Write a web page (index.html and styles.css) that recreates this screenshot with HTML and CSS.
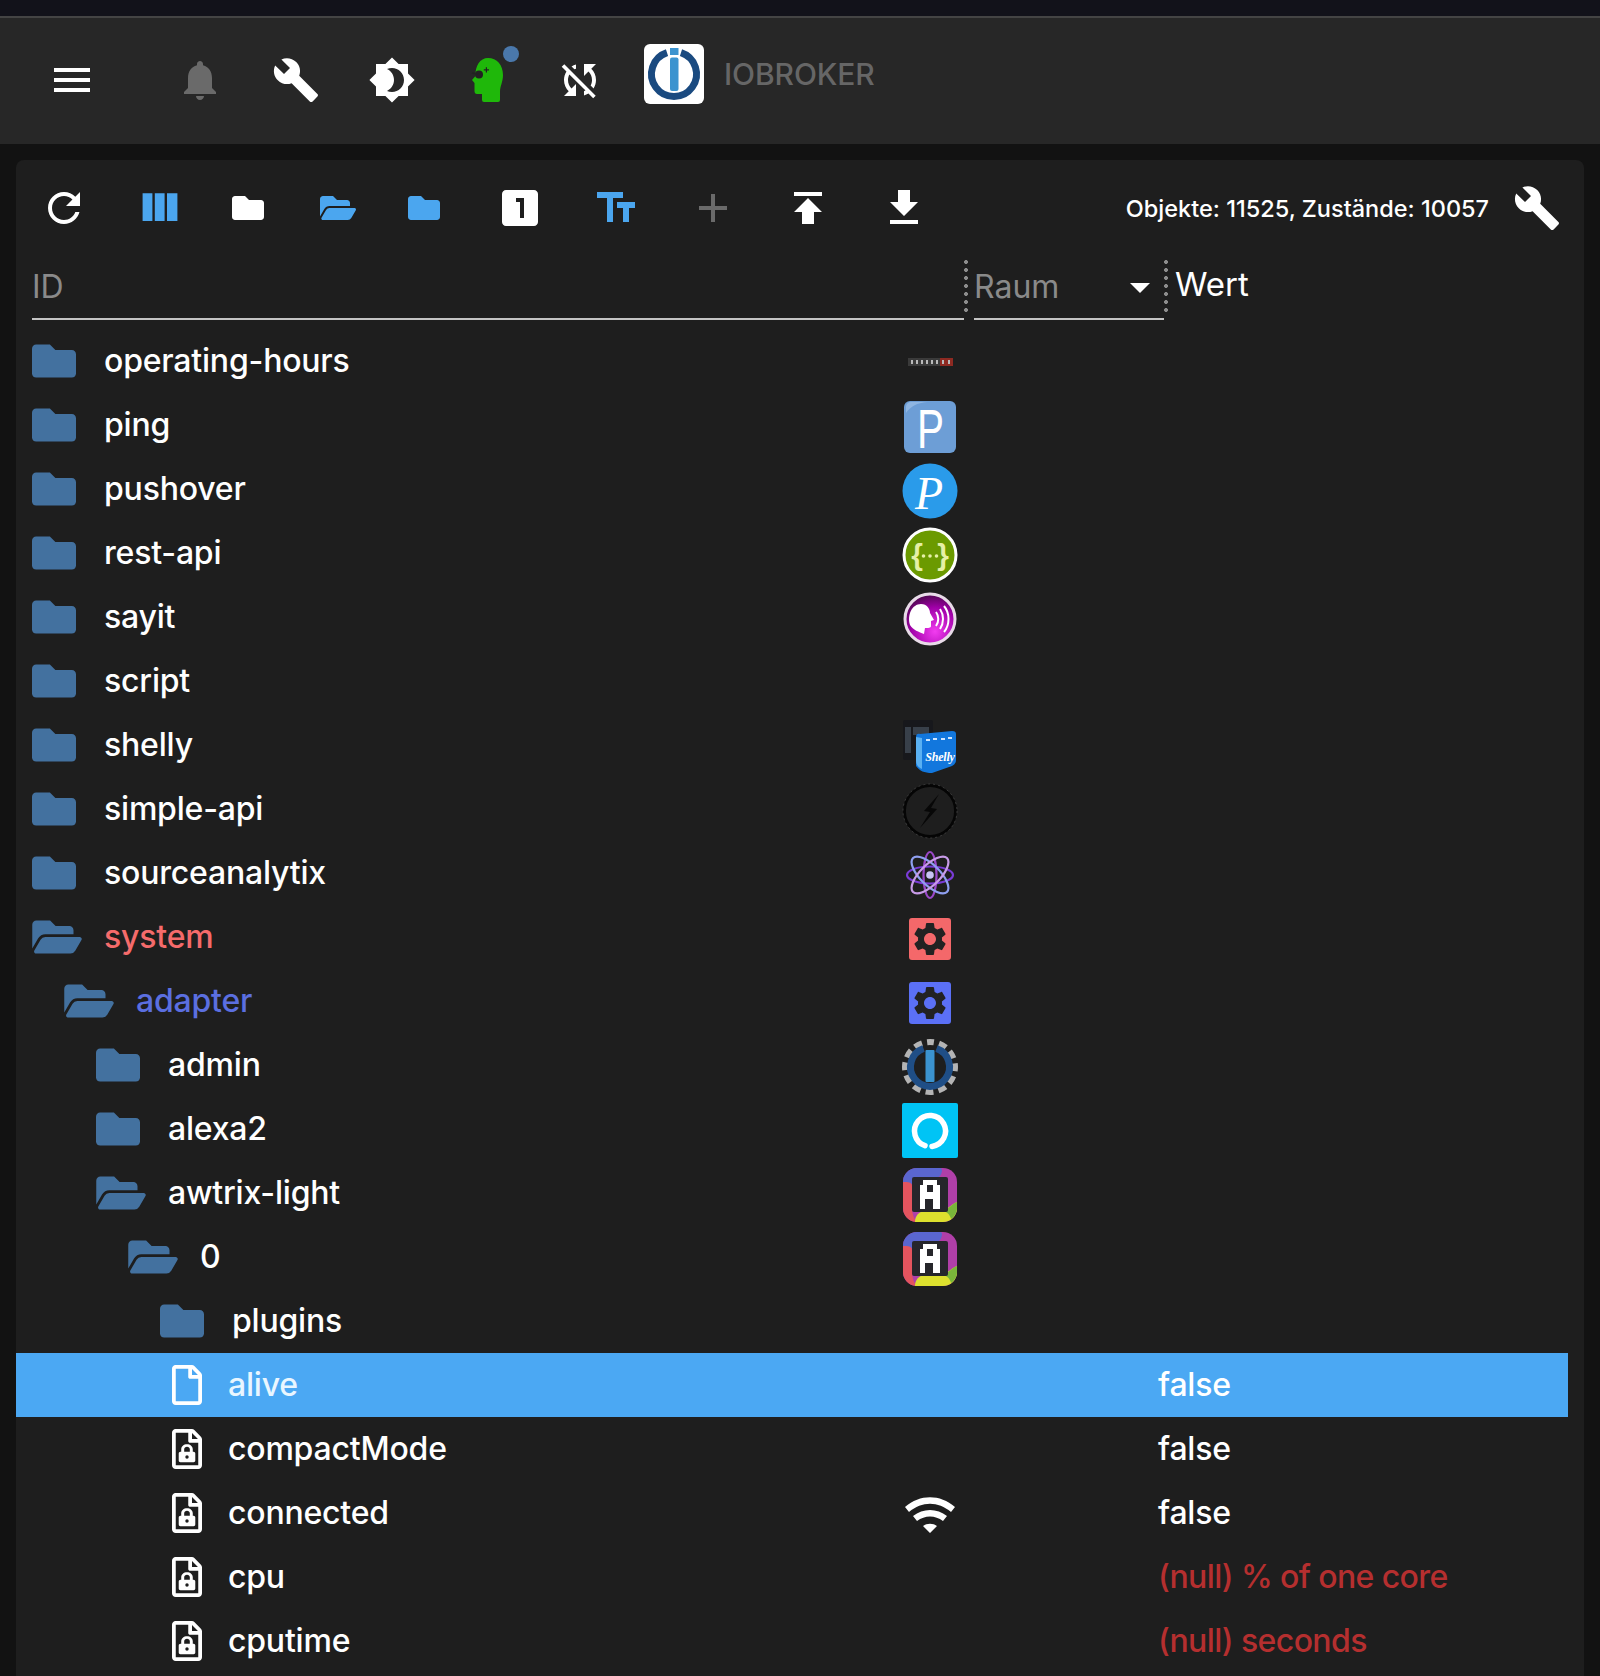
FILE: index.html
```html
<!DOCTYPE html>
<html lang="de">
<head>
<meta charset="utf-8">
<title>ioBroker Objekte</title>
<link rel="stylesheet" href="styles.css">
</head>
<body>
<svg class="defs" width="0" height="0" aria-hidden="true">
  <defs>
    <symbol id="fa-folder" viewBox="0 0 512 512"><path d="M464 128H272l-64-64H48C21.49 64 0 85.49 0 112v288c0 26.51 21.49 48 48 48h416c26.51 0 48-21.49 48-48V176c0-26.51-21.49-48-48-48z"/></symbol>
    <symbol id="fa-open" viewBox="0 0 576 512"><path d="M572.694 292.093L500.27 416.248A63.997 63.997 0 0 1 444.989 448H45.025c-18.523 0-30.064-20.093-20.731-36.093l72.424-124.155A64 64 0 0 1 152 256h399.964c18.523 0 30.064 20.093 20.73 36.093zM152 224h328v-48c0-26.51-21.49-48-48-48H272l-64-64H48C21.49 64 0 85.49 0 112v278.046l69.077-118.418C86.214 242.25 117.989 224 152 224z"/></symbol>
    <symbol id="fa-file" viewBox="0 0 384 512"><path d="M369.9 97.9L286 14C277 5 264.8-.1 252.1-.1H48C21.5 0 0 21.5 0 48v416c0 26.5 21.5 48 48 48h288c26.5 0 48-21.5 48-48V131.9c0-12.7-5.1-25-14.1-34zM332.1 128H256V51.9l76.1 76.1zM48 464V48h160v104c0 13.3 10.7 24 24 24h104v288H48z"/></symbol>
    <symbol id="fa-lock" viewBox="0 0 384 512"><path d="M369.9 97.9L286 14C277 5 264.8-.1 252.1-.1H48C21.5 0 0 21.5 0 48v416c0 26.5 21.5 48 48 48h288c26.5 0 48-21.5 48-48V131.9c0-12.7-5.1-25-14.1-34zM332.1 128H256V51.9l76.1 76.1zM48 464V48h160v104c0 13.3 10.7 24 24 24h104v288H48z"/><path fill-rule="evenodd" d="M118 290v-30c0-40 32-66 74-66s74 26 74 66v30h10c12 0 22 10 22 22v92c0 12-10 22-22 22H108c-12 0-22-10-22-22v-92c0-12 10-22 22-22zm38 0h72v-30c0-20-16-32-36-32s-36 12-36 32zm36 46a22 22 0 1 0 0 44a22 22 0 1 0 0-44z"/></symbol>
    <symbol id="m-wrench" viewBox="0 0 24 24"><path d="M22.7 19l-9.1-9.1c.9-2.3.4-5-1.5-6.9-2-2-5-2.4-7.4-1.3L9 6 6 9 1.6 4.7C.4 7.1.9 10.1 2.9 12.1c1.9 1.9 4.6 2.4 6.9 1.5l9.1 9.1c.4.4 1 .4 1.4 0l2.3-2.3c.5-.4.5-1.1.1-1.4z"/></symbol>
    <symbol id="m-gear" viewBox="0 0 24 24"><path d="M19.14 12.94c.04-.3.06-.61.06-.94 0-.32-.02-.64-.07-.94l2.03-1.58c.18-.14.23-.41.12-.61l-1.92-3.32c-.12-.22-.37-.29-.59-.22l-2.39.96c-.5-.38-1.03-.7-1.62-.94l-.36-2.54c-.04-.24-.24-.41-.48-.41h-3.84c-.24 0-.43.17-.47.41l-.36 2.54c-.59.24-1.13.57-1.62.94l-2.39-.96c-.22-.08-.47 0-.59.22L2.74 8.87c-.12.21-.08.47.12.61l2.03 1.58c-.05.3-.09.63-.09.94s.02.64.07.94l-2.03 1.58c-.18.14-.23.41-.12.61l1.92 3.32c.12.22.37.29.59.22l2.39-.96c.5.38 1.03.7 1.62.94l.36 2.54c.05.24.24.41.48.41h3.84c.24 0 .44-.17.47-.41l.36-2.54c.59-.24 1.13-.56 1.62-.94l2.39.96c.22.08.47 0 .59-.22l1.92-3.32c.12-.22.07-.47-.12-.61l-2.01-1.58zM12 15.6c-1.98 0-3.6-1.62-3.6-3.6s1.62-3.6 3.6-3.6 3.6 1.62 3.6 3.6-1.62 3.6-3.6 3.6z"/></symbol>
    <symbol id="awtrix" viewBox="0 0 64 64">
      <rect x="5" y="7" width="54" height="54" rx="14" fill="#b03fa8"/>
      <path d="M5 23V21A14 14 0 0 1 19 7H41c1 0 3 0 3 2 0 5-3 8-7 8H20c-3 0-5 2-6 6z" fill="#5a66cf"/>
      <path d="M5 21c5 0 9 0 9 4v22c0 6 2 10 4 14h0A14 14 0 0 1 5 47z" fill="#e4545e"/>
      <path d="M17 61c0-6 4-11 10-11h16c5 0 9-6 16-9v6a14 14 0 0 1-14 14z" fill="#dde02e"/>
      <path d="M44 50c5 0 8-6 15-9v6c0 5-3 9-6 11-1-5-5-8-9-8z" fill="#79b63a"/>
      <rect x="14" y="16" width="36" height="35" rx="2" fill="#26262b"/>
      <path fill-rule="evenodd" d="M22 48V24h3v-5h14v5h3v24h-7V38h-8v10zm7-17h6v-7h-6z" fill="#fff"/>
    </symbol>
  </defs>
</svg>

<div class="topstrip"></div>
<header class="appbar">
  <svg class="ic48 white menu-ic" viewBox="0 0 24 24"><path d="M3 18h18v-2H3v2zm0-5h18v-2H3v2zm0-7v2h18V6H3z"/></svg>
  <svg class="ic48 muted" viewBox="0 0 24 24"><path d="M12 22c1.1 0 2-.9 2-2h-4c0 1.1.89 2 2 2zm6-6v-5c0-3.07-1.64-5.64-4.5-6.32V4c0-.83-.67-1.5-1.5-1.5s-1.5.67-1.5 1.5v.68C7.63 5.36 6 7.92 6 11v5l-2 2v1h16v-1l-2-2z"/></svg>
  <svg class="ic48 white"><use href="#m-wrench"/></svg>
  <svg class="ic48 white" viewBox="0 0 24 24"><path fill-rule="evenodd" d="M20 8.69V4h-4.69L12 .69 8.69 4H4v4.69L.69 12 4 15.31V20h4.69L12 23.31 15.31 20H20v-4.69L23.31 12 20 8.69zM12 18c-.89 0-1.74-.2-2.5-.55C11.56 16.5 13 14.42 13 12s-1.44-4.5-3.5-5.45C10.26 6.2 11.11 6 12 6c3.31 0 6 2.69 6 6s-2.69 6-6 6z"/></svg>
  <span class="head-wrap">
    <svg class="ic48" viewBox="0 0 48 48">
      <path d="M24 2C33 2 39 9 39 19 39 26 36 30 36 36V44Q36 46 34 46H20Q18 46 18 44V38H13Q10.500 38 10.500 35V27L8 24 11.500 20C11 10 16 2 24 2z" fill="#1fb80a"/>
      <circle cx="15" cy="18.500" r="4" fill="#222"/>
      <path d="M8 17l6 1" stroke="#222" stroke-width="1.500"/>
      <path d="M23 16.500h-1.200v-2h-2v-1.200h2v-2H23v2h2v1.200h-2z" fill="#222"/>
    </svg>
    <span class="notif-dot"></span>
  </span>
  <svg class="ic48 white sync-ic" viewBox="0 0 24 24"><path d="M10 6.35V4.26c-.8.21-1.55.54-2.23.96l1.46 1.46c.25-.12.5-.24.77-.33zm-7.14-.94l2.36 2.36C4.45 8.99 4 10.44 4 12c0 2.21.91 4.2 2.36 5.64L4 20h6v-6l-2.24 2.24C6.68 15.15 6 13.66 6 12c0-1 .25-1.94.68-2.77l8.08 8.08c-.25.13-.5.25-.77.34v2.09c.8-.21 1.55-.54 2.23-.96l2.36 2.36 1.27-1.27L4.14 4.14 2.86 5.41zM20 4h-6v6l2.24-2.24C17.32 8.85 18 10.34 18 12c0 1-.25 1.94-.68 2.77l1.46 1.46C19.55 15.01 20 13.56 20 12c0-2.21-.91-4.2-2.36-5.64L20 4z"/></svg>
  <span class="logo-box">
    <svg viewBox="0 0 60 60" class="logo-svg">
      <path d="M23 8.600A22.500 22.500 0 1 0 37 8.600" fill="none" stroke="#1a4a80" stroke-width="7"/>
      <rect x="26" y="4" width="8.500" height="7" fill="#3b93cf"/>
      <rect x="26" y="13.500" width="8.500" height="33.500" rx="2" fill="#3b93cf"/>
    </svg>
  </span>
  <span class="brand">IOBROKER</span>
</header>

<main class="page">
  <section class="panel">
    <div class="toolbar">
      <div class="tools">
        <svg class="ic48 white" viewBox="0 0 24 24"><path d="M17.65 6.35C16.2 4.9 14.21 4 12 4c-4.42 0-7.99 3.58-7.99 8s3.57 8 7.99 8c3.73 0 6.84-2.55 7.73-6h-2.08c-.82 2.33-3.04 4-5.65 4-3.31 0-6-2.69-6-6s2.69-6 6-6c1.66 0 3.14.69 4.22 1.78L13 11h7V4l-2.35 2.35z"/></svg>
        <svg class="ic48 blue" viewBox="0 0 24 24"><path d="M9.400 18.500h4.900V4.600H9.400zM3.300 18.500h4.900V4.600H3.300zM15.500 4.600v13.900H20.700V4.600z"/></svg>
        <svg class="ic48 white near"><use href="#fa-folder" x="8" y="8" width="32" height="32"/></svg>
        <svg class="ic48 blue near"><use href="#fa-open" x="8" y="8" width="36" height="32"/></svg>
        <svg class="ic48 blue near"><use href="#fa-folder" x="8" y="8" width="32" height="32"/></svg>
        <svg class="ic48 white" viewBox="0 0 24 24"><path d="M19 3H5c-1.1 0-2 .9-2 2v14c0 1.1.9 2 2 2h14c1.1 0 2-.9 2-2V5c0-1.1-.9-2-2-2zm-5 14h-2V9h-2V7h4v10z"/></svg>
        <svg class="ic48 blue" viewBox="0 0 24 24"><path d="M2.500 4v3h5v12h3V7h5V4h-13zm19 5h-9v3h3v7h3v-7h3V9z"/></svg>
        <svg class="ic48 muted nudge" viewBox="0 0 24 24"><path d="M19 13h-6v6h-2v-6H5v-2h6V5h2v6h6v2z"/></svg>
        <svg class="ic48 white" viewBox="0 0 24 24"><path d="M5 4v2h14V4H5zm0 10h4v6h6v-6h4l-7-7-7 7z"/></svg>
        <svg class="ic48 white" viewBox="0 0 24 24"><path d="M19 9h-4V3H9v6H5l7 7 7-7zM5 18v2h14v-2H5z"/></svg>
      </div>
      <div class="stats">Objekte: 11525, Zustände: 10057</div>
      <svg class="ic48 white"><use href="#m-wrench"/></svg>
    </div>

    <div class="cols">
      <div class="col col-id"><span class="ph">ID</span></div>
      <span class="split"></span>
      <div class="col col-room"><span class="ph">Raum</span><span class="caret"></span></div>
      <span class="split"></span>
      <div class="col-val">Wert</div>
    </div>

    <div class="tree">
      <div class="row"><div class="name"><svg class="ficon"><use href="#fa-folder"/></svg><span>operating-hours</span></div>
        <svg class="app" viewBox="0 0 64 64"><rect x="10" y="29" width="45" height="8" fill="#3a3a3a"/><rect x="42" y="29" width="13" height="8" fill="#8e2a22"/><path d="M13 31h2v4h-2zM18 31h2v4h-2zM23 31h2v4h-2zM28 31h2v4h-2zM33 31h2v4h-2zM38 31h2v4h-2zM44 31h2v4h-2zM50 31h2v4h-2z" fill="#b9b9b9"/></svg></div>
      <div class="row"><div class="name"><svg class="ficon"><use href="#fa-folder"/></svg><span>ping</span></div>
        <svg class="app" viewBox="0 0 64 64"><rect x="6" y="8" width="52" height="52" rx="6" fill="#6d9ed6"/><path d="M8 14a5 5 0 0 1 5-5h16c-10 1-16 4-21 11z" fill="#8fb6e2"/><text x="19" y="55" class="ping-t" textLength="27" lengthAdjust="spacingAndGlyphs">P</text></svg></div>
      <div class="row"><div class="name"><svg class="ficon"><use href="#fa-folder"/></svg><span>pushover</span></div>
        <svg class="app" viewBox="0 0 64 64"><circle cx="32" cy="34" r="27.500" fill="#2a9bea"/><text x="31" y="52" class="push-t">P</text></svg></div>
      <div class="row"><div class="name"><svg class="ficon"><use href="#fa-folder"/></svg><span>rest-api</span></div>
        <svg class="app" viewBox="0 0 64 64"><circle cx="32" cy="34" r="26" fill="#6b9a00" stroke="#fff" stroke-width="3"/><text x="19" y="44" class="rest-t">{</text><text x="45" y="44" class="rest-t">}</text><circle cx="25.500" cy="35" r="1.800" fill="#e6f0a6"/><circle cx="32" cy="35" r="1.800" fill="#e6f0a6"/><circle cx="38.500" cy="35" r="1.800" fill="#e6f0a6"/></svg></div>
      <div class="row"><div class="name"><svg class="ficon"><use href="#fa-folder"/></svg><span>sayit</span></div>
        <svg class="app" viewBox="0 0 64 64"><defs><radialGradient id="mg" cx=".6" cy=".75" r=".8"><stop offset="0" stop-color="#f23cf0"/><stop offset=".6" stop-color="#a000a8"/><stop offset="1" stop-color="#40083f"/></radialGradient></defs><circle cx="32" cy="34" r="25" fill="url(#mg)" stroke="#e8dbe8" stroke-width="3"/><path d="M12 40c-3-10 2-21 11-21 6 0 9 5 9 9l4 7-3 1v5c0 2-3 2-6 2l-1 6c-5-2-11-4-14-9z" fill="#fff"/><path d="M38 27c3 4 3 10 0 14M42 24c4 6 4 14 0 20M46 21c6 7 6 19 0 26" fill="none" stroke="#fff" stroke-width="2"/></svg></div>
      <div class="row"><div class="name"><svg class="ficon"><use href="#fa-folder"/></svg><span>script</span></div></div>
      <div class="row"><div class="name"><svg class="ficon"><use href="#fa-folder"/></svg><span>shelly</span></div>
        <svg class="app" viewBox="0 0 64 64"><rect x="5" y="7" width="30" height="40" rx="2" fill="#17181c"/><path d="M7 14h6v26H7zM15 14h16v8H15z" fill="#38404a"/><path d="M18 24c0-3 2-4 4-3l32-3c3 0 4 1 4 3v26c0 3-2 5-4 6l-20 7c-8 0-12-2-16-7z" fill="#1277dd"/><path d="M18 24l6 1v31c-3-1-6-4-6-8z" fill="#5ab0f2"/><text x="42" y="48" class="shel-t">Shelly</text><path d="M28 26h4v2h-4zM35 25h4v2h-4zM43 25h4v2h-4zM50 24h4v2h-4z" fill="#cfe6ff"/></svg></div>
      <div class="row"><div class="name"><svg class="ficon"><use href="#fa-folder"/></svg><span>simple-api</span></div>
        <svg class="app" viewBox="0 0 64 64"><circle cx="32" cy="34" r="25.500" fill="none" stroke="#050505" stroke-width="2.800"/><circle cx="32" cy="34" r="27" fill="none" stroke="#555" stroke-width=".6" stroke-dasharray="2 3"/><path d="M41 17L26 34l6 1-10 16 17-19-6-1z" fill="#070707"/></svg></div>
      <div class="row"><div class="name"><svg class="ficon"><use href="#fa-folder"/></svg><span>sourceanalytix</span></div>
        <svg class="app" viewBox="0 0 64 64"><g fill="none" stroke-width="2.200"><ellipse cx="32" cy="34" rx="23" ry="8.500" stroke="#7a3bd6"/><ellipse cx="32" cy="34" rx="23" ry="6.500" stroke="#9a48c8" transform="rotate(90 32 34)"/><ellipse cx="32" cy="34" rx="24" ry="10" stroke="#8f9ff0" transform="rotate(45 32 34)"/><ellipse cx="32" cy="34" rx="24" ry="10" stroke="#c89be8" transform="rotate(135 32 34)"/></g><circle cx="32" cy="34" r="3.800" fill="#c9c4f5"/></svg></div>
      <div class="row"><div class="name t-red"><svg class="ficon wide"><use href="#fa-open"/></svg><span>system</span></div>
        <svg class="app" viewBox="0 0 64 64"><rect x="11" y="13" width="42" height="42" rx="3" fill="#f4686a"/><use href="#m-gear" x="12" y="14" width="40" height="40" fill="#222"/></svg></div>
      <div class="row l1"><div class="name t-blue"><svg class="ficon wide"><use href="#fa-open"/></svg><span>adapter</span></div>
        <svg class="app" viewBox="0 0 64 64"><rect x="11" y="13" width="42" height="42" rx="3" fill="#5b70f5"/><use href="#m-gear" x="12" y="14" width="40" height="40" fill="#222"/></svg></div>
      <div class="row l2"><div class="name"><svg class="ficon"><use href="#fa-folder"/></svg><span>admin</span></div>
        <svg class="app" viewBox="0 0 64 64"><circle cx="32" cy="34" r="25" fill="none" stroke="#b4b4b4" stroke-width="6" stroke-dasharray="8 5.090" stroke-dashoffset="4" transform="rotate(-90 32 34)"/><path d="M25.500 15.500A19.500 19.500 0 1 0 38.500 15.500" fill="none" stroke="#1f4e86" stroke-width="7"/><rect x="27.500" y="17" width="9" height="32" rx="1" fill="#3b93cf"/></svg></div>
      <div class="row l2"><div class="name"><svg class="ficon"><use href="#fa-folder"/></svg><span>alexa2</span></div>
        <svg class="app" viewBox="0 0 64 64"><rect x="4" y="6" width="56" height="55" rx="2" fill="#00c4f5"/><path d="M27 48.700A15.500 15.500 0 1 1 34 49.400" fill="none" stroke="#fff" stroke-width="5.500" stroke-linecap="round"/></svg></div>
      <div class="row l2"><div class="name"><svg class="ficon wide"><use href="#fa-open"/></svg><span>awtrix-light</span></div>
        <svg class="app" viewBox="0 0 64 64"><use href="#awtrix"/></svg></div>
      <div class="row l3"><div class="name"><svg class="ficon wide"><use href="#fa-open"/></svg><span>0</span></div>
        <svg class="app" viewBox="0 0 64 64"><use href="#awtrix"/></svg></div>
      <div class="row l4"><div class="name"><svg class="ficon"><use href="#fa-folder"/></svg><span>plugins</span></div></div>
      <div class="row l4 selected"><div class="name state"><svg class="dicon"><use href="#fa-file"/></svg><span>alive</span></div><span class="noapp"></span><div class="val">false</div></div>
      <div class="row l4"><div class="name state"><svg class="dicon"><use href="#fa-lock"/></svg><span>compactMode</span></div><span class="noapp"></span><div class="val">false</div></div>
      <div class="row l4"><div class="name state"><svg class="dicon"><use href="#fa-lock"/></svg><span>connected</span></div>
        <svg class="app white" viewBox="0 0 64 64"><path d="M7 26c15-13 35-13 50 0l-4 5c-13-11-29-11-42 0zM15 35c10-8 24-8 34 0l-4 5c-8-6-18-6-26 0zM25 45c4-3 10-3 14 0l-7 7z"/></svg><div class="val">false</div></div>
      <div class="row l4"><div class="name state"><svg class="dicon"><use href="#fa-lock"/></svg><span>cpu</span></div><span class="noapp"></span><div class="val t-null">(null) % of one core</div></div>
      <div class="row l4"><div class="name state"><svg class="dicon"><use href="#fa-lock"/></svg><span>cputime</span></div><span class="noapp"></span><div class="val t-null">(null) seconds</div></div>
    </div>
  </section>
</main>
</body>
</html>
```

FILE: styles.css
```css
* { box-sizing: border-box; }
html, body { margin: 0; padding: 0; }
body {
  height: 1676px;
  overflow: hidden;
  background: #121212;
  color: #fff;
  font-family: Inter, "Noto Sans", "Liberation Sans", sans-serif;
}
.defs { position: absolute; }
.ic48 { width: 48px; height: 48px; flex: none; display: block; }
.white { fill: #fff; }
.muted { fill: #6a6a6a; }
.blue { fill: #4ba6ef; }

.topstrip { height: 16px; background: #12121a; }
.appbar {
  height: 128px;
  border-top: 2px solid #444;
  background: #272727;
  display: flex;
  align-items: center;
  gap: 48px;
  padding: 0 0 2px 48px;
}
.menu-ic { margin-right: 32px; }
.head-wrap { position: relative; width: 48px; height: 48px; flex: none; }
.notif-dot {
  position: absolute;
  left: 39px;
  top: -10px;
  width: 16px;
  height: 16px;
  border-radius: 50%;
  background: #4a78ab;
}
.sync-ic { margin-left: -4px; }
.logo-box {
  width: 60px;
  height: 60px;
  margin: -12px 0 0 -8px;
  border-radius: 6px;
  background: #fff;
  flex: none;
}
.logo-svg { display: block; width: 60px; height: 60px; }
.brand {
  margin: -12px 0 0 -28px;
  color: #666;
  font-size: 30px;
  font-weight: 500;
  letter-spacing: -.1px;
}

.page { padding: 16px 16px 0; }
.panel {
  height: 1516px;
  background: #1e1e1e;
  border-radius: 8px 8px 0 0;
  overflow: hidden;
}
.toolbar {
  height: 96px;
  display: flex;
  align-items: center;
  padding: 0 23px 0 24px;
}
.tools { display: flex; gap: 48px; flex: 1; }
.near { margin-left: -8px; }
.nudge { margin: 0 -1px 0 1px; }
.stats { font-size: 23.5px; font-weight: 500; margin-right: 24px; }

.cols {
  height: 73px;
  display: flex;
  padding-left: 16px;
}
.col { height: 64px; display: flex; align-items: center; padding-bottom: 2px; border-bottom: 2px solid #c4c4c4; }
.col-id { width: 932px; }
.col-room { width: 190px; justify-content: space-between; padding-right: 14px; }
.ph { color: #8a8a8a; font-size: 32px; }
.split {
  width: 10px;
  height: 56px;
  flex: none;
  margin-top: 4px;
  background: radial-gradient(circle at 2px 2px, #8d8d8d 1.8px, transparent 2.2px) 0 0 / 4px 8px repeat-y;
}
.caret {
  width: 0;
  height: 0;
  border-left: 10px solid transparent;
  border-right: 10px solid transparent;
  border-top: 10px solid #fff;
  margin-top: 4px;
}
.col-val { font-size: 33px; line-height: 56px; margin-left: 1px; }

.tree { width: 1552px; }
.row {
  height: 64px;
  display: flex;
  align-items: center;
  padding-left: 16px;
  font-size: 32px;
  font-weight: 450;
  letter-spacing: -.2px;
  --indent: 0px;
}
.l1 { --indent: 32px; }
.l2 { --indent: 64px; }
.l3 { --indent: 96px; }
.l4 { --indent: 128px; }
.name {
  width: 866px;
  flex: none;
  height: 64px;
  display: flex;
  align-items: center;
  padding-left: var(--indent);
}
.name span { margin-top: -2px; }
.ficon { width: 44px; height: 44px; margin-right: 28px; fill: #43719f; flex: none; }
.ficon.wide { width: 50px; margin-right: 22px; }
.dicon { width: 30px; height: 40px; margin: 0 26px 0 12px; fill: #fff; flex: none; }
.app { width: 64px; height: 64px; flex: none; overflow: visible; }
.noapp { width: 64px; flex: none; }
.val { margin: -2px 0 0 196px; }
.t-red { color: #f56b6b; font-weight: 500; }
.t-blue { color: #5b6fe0; }
.t-null { color: #b52f2f; letter-spacing: -.6px; }
.selected { background: #4ba8f3; }
.selected .name { color: #e9f6ff; }

.ping-t { font: 400 56px "Liberation Sans", sans-serif; fill: #fff; letter-spacing: 0; }
.push-t { font: italic 400 46px "Liberation Serif", serif; fill: #fff; text-anchor: middle; }
.rest-t { font: 700 30px "Liberation Sans", sans-serif; fill: #e6f0a6; text-anchor: middle; }
.shel-t { font: italic 700 12px "Liberation Serif", serif; fill: #fff; text-anchor: middle; }
```
